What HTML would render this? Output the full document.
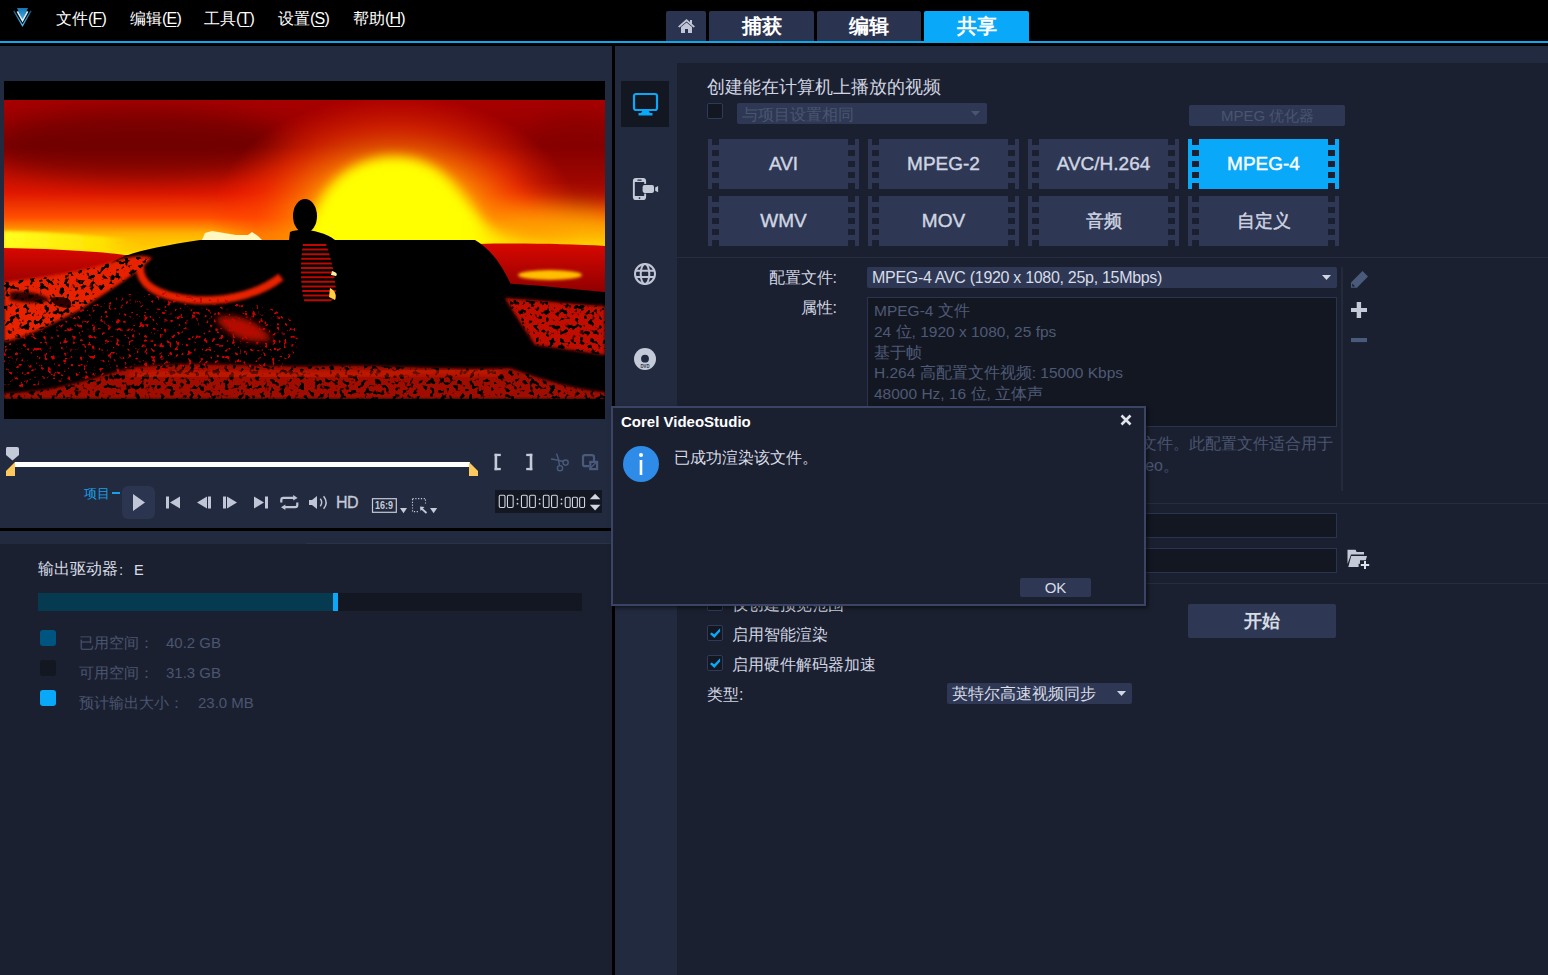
<!DOCTYPE html>
<html><head><meta charset="utf-8">
<style>
*{margin:0;padding:0;box-sizing:border-box}
html,body{width:1548px;height:975px;overflow:hidden}
body{position:relative;background:#1b2030;font-family:"Liberation Sans",sans-serif;color:#c8cdd8}
.a{position:absolute}
.t{position:absolute;white-space:nowrap;line-height:1}
.menu{font-size:16px;color:#fff;top:11px}
.menu u{text-decoration:underline;text-underline-offset:2px}
.tab{position:absolute;top:11px;height:30px;background:#2a3450;border-radius:2px 2px 0 0;color:#fff;font-weight:bold;font-size:20px;text-align:center;line-height:30px}
.fmt{position:absolute;width:151px;height:50px;background:#2e3854;color:#d0d5e2;font-size:19px;text-align:center;line-height:50px;-webkit-text-stroke:0.4px currentColor}
.fmt:before,.fmt:after{content:"";position:absolute;top:0;width:11px;height:50px;
 background:repeating-linear-gradient(to bottom,#1b2030 0px,#1b2030 6px,transparent 6px,transparent 11px)}
.fmt:before{left:4px;width:7px}
.fmt:after{right:4px;width:7px}
.fmt.on{background:#0aa8f8;color:#fff}
.cb{position:absolute;width:16px;height:16px;background:#131722;border:1px solid #2f3a58;border-radius:2px}
.ic{fill:#c0c6d6}
</style></head><body>
<!-- menu bar -->
<div class="a" style="left:0;top:0;width:1548px;height:46px;background:#000"></div>
<div class="a" style="left:0;top:41px;width:1548px;height:2px;background:#0ea8ee"></div>
<svg class="a" style="left:8px;top:4px" width="30" height="26" viewBox="8 4 30 26">
 <defs><linearGradient id="lg" x1="0" y1="0" x2="0" y2="1"><stop offset="0" stop-color="#1a72b2"/><stop offset="1" stop-color="#3ab4ec"/></linearGradient>
 <linearGradient id="lg2" x1="0" y1="0" x2="0" y2="1"><stop offset="0" stop-color="#165a88"/><stop offset="1" stop-color="#48bcf0"/></linearGradient></defs>
 <polygon points="17,8 28,8 22.5,20" fill="url(#lg)"/>
 <polyline points="17.4,11.4 22.5,20.8 27.6,11.4" stroke="#d8f0ff" stroke-width="1.7" fill="none"/>
 <polyline points="13.8,10.8 22.5,25.6 31,10.8" stroke="url(#lg2)" stroke-width="1.3" fill="none"/>
</svg>
<div class="t menu" style="left:56px">文件<span style="letter-spacing:-0.8px">(<u>F</u>)</span></div>
<div class="t menu" style="left:130px">编辑<span style="letter-spacing:-0.8px">(<u>E</u>)</span></div>
<div class="t menu" style="left:204px">工具<span style="letter-spacing:-0.8px">(<u>T</u>)</span></div>
<div class="t menu" style="left:278px">设置<span style="letter-spacing:-0.8px">(<u>S</u>)</span></div>
<div class="t menu" style="left:353px">帮助<span style="letter-spacing:-0.8px">(<u>H</u>)</span></div>
<!-- tabs -->
<div class="tab" style="left:666px;width:40px">
 <svg class="a" style="left:12px;top:8px" width="17" height="14" viewBox="0 0 17 14"><path d="M8.5 0 L17 7.5 L15.5 8.5 L8.5 2.5 L1.5 8.5 L0 7.5 Z M12 1 h2 v4 l-2 -1.6 Z M3 8 L8.5 3.5 L14 8 V14 H10 V10 H7 V14 H3 Z" fill="#c0c6d6"/></svg>
</div>
<div class="tab" style="left:709px;width:105px">捕获</div>
<div class="tab" style="left:817px;width:104px">编辑</div>
<div class="tab" style="left:924px;width:105px;background:#0aa8f8">共享</div>

<!-- left panel -->
<div class="a" style="left:0;top:46px;width:612px;height:482px;background:#222a3f"></div>
<div class="a" style="left:0;top:528px;width:611px;height:3px;background:#000"></div>
<div class="a" style="left:0;top:531px;width:612px;height:13px;background:#222a3f"></div>
<div class="a" style="left:306px;top:543px;width:305px;height:1px;background:#2a3248"></div>
<div class="a" style="left:612px;top:46px;width:3px;height:929px;background:#000"></div>

<!-- video -->
<div class="a" id="video" style="left:4px;top:81px;width:601px;height:338px;background:#000;overflow:hidden">
<svg width="601" height="338" viewBox="4 81 601 338">
 <defs>
  <linearGradient id="sky" x1="0" y1="100" x2="0" y2="255" gradientUnits="userSpaceOnUse">
   <stop offset="0" stop-color="#a80000"/>
   <stop offset="0.3" stop-color="#900000"/>
   <stop offset="0.6" stop-color="#e01800"/>
   <stop offset="0.76" stop-color="#ff5000"/>
   <stop offset="0.86" stop-color="#ffb000"/>
   <stop offset="1" stop-color="#ffe800"/>
  </linearGradient>
  <radialGradient id="glow" cx="0.5" cy="0.5" r="0.5">
   <stop offset="0" stop-color="#ffe000"/>
   <stop offset="0.45" stop-color="#ffa000" stop-opacity="0.9"/>
   <stop offset="0.75" stop-color="#ff4000" stop-opacity="0.5"/>
   <stop offset="1" stop-color="#ff2000" stop-opacity="0"/>
  </radialGradient>
  <linearGradient id="hz" x1="0" y1="0" x2="1" y2="0">
   <stop offset="0" stop-color="#ffff20"/>
   <stop offset="0.6" stop-color="#ffe000"/>
   <stop offset="1" stop-color="#ffa000" stop-opacity="0"/>
  </linearGradient>
  <linearGradient id="sea" x1="0" y1="0" x2="0" y2="1">
   <stop offset="0" stop-color="#d80800"/>
   <stop offset="1" stop-color="#900000"/>
  </linearGradient>
  <filter id="b6" x="-50%" y="-50%" width="200%" height="200%"><feGaussianBlur stdDeviation="6"/></filter>
  <filter id="b3" x="-50%" y="-50%" width="200%" height="200%"><feGaussianBlur stdDeviation="3"/></filter>
  <filter id="b15" x="-50%" y="-50%" width="200%" height="200%"><feGaussianBlur stdDeviation="1.5"/></filter>
  <filter id="b12" x="-50%" y="-50%" width="200%" height="200%"><feGaussianBlur stdDeviation="12"/></filter>
  <filter id="spk" x="0" y="0" width="100%" height="100%"><feTurbulence type="fractalNoise" baseFrequency="0.25" numOctaves="2" seed="7"/><feColorMatrix type="matrix" values="0 0 0 0 0.6  0 0 0 0 0.0  0 0 0 0 0  0 0 0 10 -6.2"/><feComposite in2="SourceAlpha" operator="in"/></filter>
  <filter id="spk2" x="0" y="0" width="100%" height="100%"><feTurbulence type="fractalNoise" baseFrequency="0.2" numOctaves="2" seed="11"/><feColorMatrix type="matrix" values="0 0 0 0 0  0 0 0 0 0  0 0 0 0 0  0 0 0 9 -4.9"/><feComposite in2="SourceAlpha" operator="in"/></filter>
 </defs>
 <rect x="4" y="100" width="601" height="300" fill="url(#sky)"/>
 <ellipse cx="140" cy="145" rx="150" ry="35" fill="#580000" opacity="0.55" filter="url(#b12)"/>
 <ellipse cx="575" cy="165" rx="60" ry="50" fill="#800000" opacity="0.6" filter="url(#b12)"/>
 <ellipse cx="395" cy="225" rx="185" ry="130" fill="url(#glow)"/>
 <path d="M300 247 C312 225 322 162 390 157 C450 155 462 205 490 226 C515 240 560 241 605 243 L605 252 L300 252 Z" fill="#ffff00" filter="url(#b6)"/>
 <path d="M4 231 C60 232 120 238 170 242 L170 256 C120 252 60 249 4 248 Z" fill="url(#hz)" filter="url(#b15)"/>
 <ellipse cx="555" cy="228" rx="70" ry="22" fill="#ffb000" opacity="0.8" filter="url(#b12)"/>
 <rect x="4" y="255" width="601" height="145" fill="#000"/>
 <!-- seas -->
 <path d="M4 248 C60 249 110 252 130 256 L120 290 L4 290 Z" fill="url(#sea)"/>
 <path d="M478 244 C520 243 570 244 605 246 L605 292 L478 292 Z" fill="url(#sea)"/>
 <ellipse cx="550" cy="275" rx="32" ry="5" fill="#ffc000" filter="url(#b15)"/>
 <!-- hill -->
 <path d="M4 400 L4 345 C40 330 90 300 112 262 C130 252 160 246 200 240 L475 240 C492 250 505 268 515 295 C522 320 530 340 540 350 L605 360 L605 400 Z" fill="#000"/>
 <!-- left red terrain -->
 <path d="M4 282 C40 278 80 272 112 262 C128 256 145 254 152 258 C135 275 110 290 80 310 C50 325 25 338 4 342 Z" fill="#e82000" filter="url(#b15)"/>
 <path d="M10 292 C30 290 45 295 50 300 C35 305 20 302 10 300 Z" fill="#300000" filter="url(#b15)"/>
 <path d="M50 298 C65 295 75 300 70 308 C60 308 52 305 50 298 Z" fill="#300000"/>
 <!-- crater rim -->
 <path d="M140 264 C138 282 152 296 195 300 C232 302 262 292 281 277" fill="none" stroke="#e82000" stroke-width="8" filter="url(#b15)"/>
 <path d="M215 318 C235 312 260 320 272 340 C250 345 228 338 215 318 Z" fill="#b01000" filter="url(#b3)"/>
 <!-- right terrain -->
 <path d="M500 283 C540 285 580 290 605 292 L605 300 C570 298 530 292 505 292 Z" fill="#000"/>
 <path d="M505 298 C540 300 580 305 605 306 L605 355 C580 352 560 348 535 345 C525 330 515 315 505 298 Z" fill="#c01000" filter="url(#b15)"/>
 <!-- bottom strip -->
 <path d="M4 393 C60 392 100 375 135 367 C200 360 260 368 320 366 C380 364 440 370 510 368 C550 382 580 390 605 392 L605 399 L4 399 Z" fill="#a00800" filter="url(#b15)"/>
 <path d="M4 393 C60 392 100 375 135 367 C200 360 260 368 320 366 C380 364 440 370 510 368 C550 382 580 390 605 392 L605 399 L4 399 Z" fill="#fff" filter="url(#spk2)"/>
 <path d="M130 375 C200 372 300 378 420 372 L500 372" fill="none" stroke="#e02000" stroke-width="4" filter="url(#b3)"/>
 <path d="M4 345 C40 330 90 300 150 290 C220 300 260 300 285 315 C305 330 300 355 280 368 C200 365 100 375 4 390 Z" fill="#fff" filter="url(#spk)"/>
 <path d="M505 300 C540 300 580 305 605 306 L605 355 C580 352 560 348 535 345 Z" fill="#fff" filter="url(#spk2)"/>
 <path d="M4 282 C40 278 80 272 112 262 C128 256 145 254 152 258 C135 275 110 290 80 310 C50 325 25 338 4 342 Z" fill="#fff" filter="url(#spk2)"/>
 <!-- building -->
 <polygon points="202,240 205,233 212,231 236,235 248,235 252,232 258,236 262,240" fill="#fff8c0"/>
 <!-- figure -->
 <ellipse cx="305" cy="216" rx="12" ry="17" fill="#000"/>
 <path d="M290 232 C300 228 322 230 335 240 L342 275 C340 300 335 310 330 315 L300 315 C290 300 285 270 290 232 Z" fill="#000"/>
 <clipPath id="torso"><path d="M303 244 L326 244 C332 260 336 280 336 295 C334 303 320 305 305 303 C300 290 300 260 303 244 Z"/></clipPath>
 <g clip-path="url(#torso)"><path d="M298 245.0 H340 M298 249.6 H340 M298 254.2 H340 M298 258.8 H340 M298 263.4 H340 M298 268.0 H340 M298 272.6 H340 M298 277.2 H340 M298 281.8 H340 M298 286.4 H340 M298 291.0 H340 M298 295.6 H340 M298 300.2 H340 " stroke="#c00800" stroke-width="2"/></g>
 <path d="M330 288 C335 290 337 296 335 300 L329 297 Z" fill="#ffd040"/>
 <path d="M332 271 C336 272 338 274 336 276 L331 275 Z" fill="#fff0a0"/>
 <rect x="4" y="81" width="601" height="19" fill="#000"/>
 <rect x="4" y="399" width="601" height="20" fill="#000"/>
</svg>
</div>

<!-- timeline -->
<svg class="a" style="left:5px;top:446px" width="15" height="31" viewBox="0 0 15 31">
 <path d="M2 1 H12 Q14 1 14 3 V9 L7.5 14.5 L1 9 V3 Q1 1 2 1 Z" fill="#c5cad8"/>
 <polygon points="10,16 10,30 1,30 1,25" fill="#fdc85e"/>
</svg>
<div class="a" style="left:15px;top:462px;width:455px;height:5px;background:#fff"></div>
<svg class="a" style="left:469px;top:462px" width="10" height="14" viewBox="0 0 10 14"><polygon points="0,0 9,9 9,14 0,14" fill="#fdc85e"/></svg>
<svg class="a" style="left:490px;top:450px" width="112" height="24" viewBox="490 450 112 24">
 <g fill="#c5cad8">
  <rect x="494.6" y="453.8" width="2.6" height="16.4"/><rect x="494.6" y="453.8" width="6.2" height="2.3"/><rect x="494.6" y="467.9" width="6.2" height="2.3"/>
  <rect x="529.7" y="453.8" width="2.6" height="16.4"/><rect x="526.2" y="453.8" width="6.1" height="2.3"/><rect x="526.2" y="467.9" width="6.1" height="2.3"/>
 </g>
 <g fill="none" stroke="#4a5a7a" stroke-width="1.4">
  <path d="M556.5 453.5 C558 457 559 461 559.5 465.5"/>
  <path d="M551 459 C555 459.5 559 460.5 563 461.5"/>
  <circle cx="565.6" cy="462.6" r="2.6"/><circle cx="560" cy="468.2" r="2.6"/>
 </g>
 <g fill="none" stroke="#4a5a7a" stroke-width="2.2">
  <path d="M589 466.2 H585 Q583 466.2 583 464.2 V457.2 Q583 455.2 585 455.2 H592 Q594 455.2 594 457.2 V461"/>
  <rect x="590.3" y="461.9" width="6.8" height="7.2"/>
 </g>
 <path d="M590.5 468 L596 462.5" stroke="#4a5a7a" stroke-width="1.2"/>
</svg>
<div class="t" style="left:84px;top:487px;font-size:13px;color:#18a0e8">项目</div>
<div class="a" style="left:112px;top:492px;width:8px;height:2px;background:#18a0e8"></div>
<div class="a" style="left:122px;top:486px;width:33px;height:33px;background:#2b3550;border-radius:6px"></div>
<svg class="a" style="left:120px;top:486px" width="330" height="30" viewBox="0 0 330 30">
 <g fill="#c0c6d6">
 <polygon points="13,8 25,16.5 13,25"/>
 <rect x="46" y="10.5" width="3" height="12"/><polygon points="60,10.5 60,22.5 50,16.5"/>
 <polygon points="87,10.5 87,22.5 77,16.5"/><rect x="88" y="10.5" width="3" height="12"/>
 <rect x="103" y="10.5" width="3" height="12"/><polygon points="107,10.5 107,22.5 117,16.5"/>
 <polygon points="134,10.5 134,22.5 144,16.5"/><rect x="145" y="10.5" width="3" height="12"/>
 </g>
 <g fill="none" stroke="#c0c6d6" stroke-width="2.2">
  <path d="M161.3 16.6 V14 Q161.3 11.9 163.4 11.9 H174"/><path d="M177.3 16.6 V19.1 Q177.3 21.2 175.2 21.2 H165"/>
 </g>
 <g fill="#c0c6d6">
  <polygon points="173.2,8.9 177.6,11.9 173.2,14.5"/><polygon points="165.4,18.4 161,21.2 165.4,24"/>
  <polygon points="189,14 192,14 197,10 197,23 192,19 189,19"/>
 </g>
 <g fill="none" stroke="#c0c6d6" stroke-width="1.5">
  <path d="M200.3 12.8 Q203.2 16.5 200.3 20.2"/><path d="M203.6 10.2 Q208.6 16.5 203.6 22.8"/>
 </g>
</svg>
<div class="t" style="left:336px;top:495px;font-size:16px;color:#c5cad8;letter-spacing:-0.5px;-webkit-text-stroke:0.3px #c5cad8">HD</div>
<svg class="a" style="left:300px;top:485px" width="145" height="35" viewBox="300 485 145 35">
 <rect x="372.5" y="498.7" width="23.8" height="13.6" fill="none" stroke="#c5cad8" stroke-width="1.2"/>
 <text x="384" y="509.3" font-size="10" font-weight="bold" text-anchor="middle" fill="#c5cad8" font-family="Liberation Sans" textLength="18" lengthAdjust="spacingAndGlyphs">16:9</text>
 <polygon points="400,508 407,508 403.5,513.2" fill="#c5cad8"/>
 <rect x="412.5" y="498.6" width="13" height="13" fill="none" stroke="#c5cad8" stroke-width="1.1" stroke-dasharray="1.2 1.6"/>
 <rect x="418" y="504" width="10" height="10" fill="#222a3f"/>
 <path d="M421 508 L426.5 513" stroke="#c5cad8" stroke-width="1.8"/><polygon points="420,506.5 424.5,507 420.5,511" fill="#c5cad8"/>
 <polygon points="430,508 437.2,508 433.6,513.2" fill="#c5cad8"/>
</svg>
<div class="a" style="left:495px;top:490px;width:107px;height:23px;background:#131722"></div>
<svg class="a" style="left:495px;top:490px" width="107" height="23" viewBox="495 490 107 23">
 <g fill="none" stroke="#d0d5e2" stroke-width="1.1"><rect x="499.25" y="495.25" width="5.7" height="12.2" rx="1.2"/><rect x="507.45" y="495.25" width="5.7" height="12.2" rx="1.2"/><rect x="521.4499999999999" y="495.25" width="5.7" height="12.2" rx="1.2"/><rect x="529.65" y="495.25" width="5.7" height="12.2" rx="1.2"/><rect x="543.35" y="495.25" width="5.7" height="12.2" rx="1.2"/><rect x="551.5500000000001" y="495.25" width="5.7" height="12.2" rx="1.2"/><rect x="565.25" y="497.25" width="4.9" height="10.2" rx="1.2"/><rect x="572.45" y="497.25" width="4.9" height="10.2" rx="1.2"/><rect x="579.65" y="497.25" width="4.9" height="10.2" rx="1.2"/></g>
 <g fill="#d0d5e2"><circle cx="517.5" cy="499.3" r="0.9"/><circle cx="517.5" cy="503.7" r="0.9"/><circle cx="539.6" cy="499.3" r="0.9"/><circle cx="539.6" cy="503.7" r="0.9"/><circle cx="561.5" cy="499.3" r="0.9"/><circle cx="561.5" cy="503.7" r="0.9"/></g>
 <polygon points="595.1,493.8 600.4,499.2 589.8,499.2" fill="#d0d5e2"/><polygon points="589.8,504.8 600.4,504.8 595.1,510.4" fill="#d0d5e2"/>
</svg>

<!-- bottom left info -->
<div class="t" style="left:38px;top:561px;font-size:16px;color:#d8dce6">输出驱动器</div>
<div class="t" style="left:119px;top:562px;font-size:15px;color:#d8dce6">:</div>
<div class="t" style="left:134px;top:563px;font-size:14.5px;color:#d8dce6">E</div>
<div class="a" style="left:38px;top:593px;width:544px;height:18px;background:#131722"></div>
<div class="a" style="left:38px;top:593px;width:296px;height:18px;background:#053a50"></div>
<div class="a" style="left:333px;top:593px;width:5px;height:18px;background:#0aa8f8"></div>
<div class="a" style="left:40px;top:630px;width:16px;height:16px;background:#005480;border-radius:3px"></div>
<div class="a" style="left:40px;top:660px;width:16px;height:16px;background:#131722;border-radius:3px"></div>
<div class="a" style="left:40px;top:690px;width:16px;height:16px;background:#0aa8f8;border-radius:3px"></div>
<div class="t" style="left:79px;top:635px;font-size:15px;color:#4a5570">已用空间：</div>
<div class="t" style="left:166px;top:635px;font-size:15px;color:#4a5570">40.2 GB</div>
<div class="t" style="left:79px;top:665px;font-size:15px;color:#4a5570">可用空间：</div>
<div class="t" style="left:166px;top:665px;font-size:15px;color:#4a5570">31.3 GB</div>
<div class="t" style="left:79px;top:695px;font-size:15px;color:#4a5570">预计输出大小：</div>
<div class="t" style="left:198px;top:695px;font-size:15px;color:#4a5570">23.0 MB</div>

<!-- right panel -->
<div class="a" style="left:615px;top:46px;width:933px;height:929px;background:#222a3f"></div>
<div class="a" style="left:677px;top:63px;width:871px;height:912px;background:#1b2030"></div>
<div class="a" style="left:621px;top:81px;width:48px;height:46px;background:#131722"></div>
<svg class="a" style="left:632px;top:92px" width="27" height="24" viewBox="0 0 27 24">
 <rect x="2" y="2" width="23" height="16" rx="2" fill="none" stroke="#0aa8f8" stroke-width="2.2"/>
 <polygon points="11,18 16,18 18,21 9,21" fill="#0aa8f8"/><rect x="6.5" y="21" width="14" height="2.5" fill="#0aa8f8"/>
</svg>
<svg class="a" style="left:628px;top:172px" width="34" height="34" viewBox="628 172 34 34">
 <g fill="#c5cad8">
 <path d="M636 177.9 H643 Q646.1 177.9 646.1 181 V197 Q646.1 200.1 643 200.1 H636 Q632.9 200.1 632.9 197 V181 Q632.9 177.9 636 177.9 Z M634.8 182.1 V196 H644.2 V182.1 Z" fill-rule="evenodd"/>
 </g>
 <rect x="637.3" y="179.6" width="4.4" height="1.1" rx="0.5" fill="#222a3f"/>
 <circle cx="639.5" cy="198.1" r="0.9" fill="#222a3f"/>
 <rect x="641.2" y="183.9" width="16" height="9.7" fill="#222a3f"/>
 <rect x="642.6" y="185.1" width="11.4" height="7.8" rx="1.8" fill="#c5cad8"/>
 <polygon points="655.2,187.4 658.1,185.9 658.1,192.3 655.2,190.8" fill="#c5cad8"/>
</svg>
<svg class="a" style="left:633px;top:262px" width="24" height="24" viewBox="0 0 24 24" fill="none" stroke="#c0c6d6" stroke-width="2">
 <circle cx="12" cy="12" r="10"/><ellipse cx="12" cy="12" rx="4.3" ry="10"/><path d="M2 8.8 H22 M2 15 H22"/>
</svg>
<svg class="a" style="left:633px;top:347px" width="24" height="24" viewBox="0 0 24 24">
 <circle cx="12" cy="12" r="11" fill="#c5cad8"/><circle cx="12" cy="11.7" r="3.9" fill="#222a3f"/>
 <text x="12" y="20.8" font-size="5.5" font-weight="bold" text-anchor="middle" fill="#2a3248" font-family="Liberation Sans" textLength="9" lengthAdjust="spacingAndGlyphs">DVD</text>
</svg>

<div class="t" style="left:707px;top:78px;font-size:18px;color:#d0d5e2">创建能在计算机上播放的视频</div>
<div class="cb" style="left:707px;top:103px"></div>
<div class="a" style="left:737px;top:103px;width:250px;height:21px;background:#2e3854;border-radius:2px"></div>
<div class="t" style="left:742px;top:107px;font-size:16px;color:#4a5570">与项目设置相同</div>
<svg class="a" style="left:971px;top:111px" width="10" height="6"><polygon points="0,0 9,0 4.5,5" fill="#4a5570"/></svg>
<div class="a" style="left:1189px;top:105px;width:156px;height:21px;background:#2e3854;border-radius:2px"></div>
<div class="t" style="left:1221px;top:108px;font-size:15px;color:#4a5570">MPEG 优化器</div>

<div class="fmt" style="left:708px;top:139px">AVI</div>
<div class="fmt" style="left:868px;top:139px">MPEG-2</div>
<div class="fmt" style="left:1028px;top:139px">AVC/H.264</div>
<div class="fmt on" style="left:1188px;top:139px">MPEG-4</div>
<div class="fmt" style="left:708px;top:196px">WMV</div>
<div class="fmt" style="left:868px;top:196px">MOV</div>
<div class="fmt" style="left:1028px;top:196px"><span style="font-size:18px">音频</span></div>
<div class="fmt" style="left:1188px;top:196px"><span style="font-size:18px">自定义</span></div>

<div class="a" style="left:677px;top:257px;width:871px;height:1px;background:#262d40"></div>
<div class="t" style="left:700px;width:137px;text-align:right;top:270px;font-size:16px;color:#d0d5e2">配置文件:</div>
<div class="a" style="left:867px;top:267px;width:470px;height:21px;background:#2e3854;border-radius:2px"></div>
<div class="t" style="left:872px;top:270px;font-size:16px;color:#d8dce6;letter-spacing:-0.3px">MPEG-4 AVC (1920 x 1080, 25p, 15Mbps)</div>
<svg class="a" style="left:1322px;top:275px" width="10" height="6"><polygon points="0,0 9,0 4.5,5" fill="#d0d5e2"/></svg>
<svg class="a" style="left:1345px;top:265px" width="30" height="85" viewBox="1345 265 30 85">
 <polygon points="1362.5,271 1368,276.5 1357,287.7 1351,287.7 1351,282.5" fill="#4a5a7a"/>
 <polygon points="1352.2,283.6 1352.2,286.6 1355.2,286.6" fill="#1b2030"/>
 <path d="M1356.7 302 H1361.1 V307.9 H1367 V312.1 H1361.1 V318 H1356.7 V312.1 H1351 V307.9 H1356.7 Z" fill="#c5cad8"/>
 <rect x="1351" y="338" width="16" height="4.1" fill="#4a5a7a"/>
</svg>
<div class="t" style="left:700px;width:137px;text-align:right;top:300px;font-size:16px;color:#d0d5e2">属性:</div>
<div class="a" style="left:867px;top:297px;width:470px;height:130px;background:#131722;border:1px solid #2a3450"></div>
<div class="a" style="left:874px;top:301px;font-size:15.5px;line-height:20.8px;color:#4e5a75;white-space:nowrap">MPEG-4 文件<br>24 位, 1920 x 1080, 25 fps<br>基于帧<br>H.264 高配置文件视频: 15000 Kbps<br>48000 Hz, 16 位, 立体声</div>

<div class="a" style="left:1341px;top:267px;width:2px;height:224px;background:#232a3c"></div>
<div class="t" style="left:1000px;width:333px;text-align:right;top:436px;font-size:16px;color:#4a5570">MPEG-4 文件。此配置文件适合用于</div>
<div class="t" style="left:900px;width:279px;text-align:right;top:458px;font-size:16px;color:#4a5570">计算机上播放或上传至 Vimeo。</div>
<div class="a" style="left:677px;top:503px;width:871px;height:1px;background:#262d40"></div>
<div class="a" style="left:867px;top:513px;width:470px;height:25px;background:#131722;border:1px solid #2a3450"></div>
<div class="a" style="left:867px;top:548px;width:470px;height:25px;background:#131722;border:1px solid #2a3450"></div>
<svg class="a" style="left:1340px;top:540px" width="40" height="40" viewBox="1340 540 40 40">
 <path d="M1347.5 549.8 H1355.6 L1356.6 551.9 H1364 V554.6 H1351 L1347.5 564 Z" fill="#c5cad8"/>
 <path d="M1351.2 556 H1367 L1365.8 560.2 H1360 V563.8 H1358.6 V566.9 H1348.3 Z" fill="#c5cad8"/>
 <path d="M1364 561 H1366 V564 H1369.2 V566 H1366 V569 H1364 V566 H1360.8 V564 H1364 Z" fill="#dde1ea"/>
</svg>
<div class="a" style="left:677px;top:583px;width:871px;height:1px;background:#262d40"></div>
<div class="cb" style="left:707px;top:595px"></div>
<div class="t" style="left:732px;top:597px;font-size:16px;color:#d0d5e2">仅创建预览范围</div>
<div class="cb" style="left:707px;top:625px"></div>
<svg class="a" style="left:709px;top:628px" width="12" height="11"><polygon points="1,6 5.3,9.9 11.1,3.5 11.1,0.2 5.3,6.2 2.6,4.5" fill="#0aa8f8"/></svg>
<div class="t" style="left:732px;top:627px;font-size:16px;color:#d0d5e2">启用智能渲染</div>
<div class="cb" style="left:707px;top:655px"></div>
<svg class="a" style="left:709px;top:658px" width="12" height="11"><polygon points="1,6 5.3,9.9 11.1,3.5 11.1,0.2 5.3,6.2 2.6,4.5" fill="#0aa8f8"/></svg>
<div class="t" style="left:732px;top:657px;font-size:16px;color:#d0d5e2">启用硬件解码器加速</div>
<div class="t" style="left:707px;top:687px;font-size:16px;color:#d0d5e2">类型:</div>
<div class="a" style="left:947px;top:683px;width:185px;height:21px;background:#2e3854;border-radius:2px"></div>
<div class="t" style="left:952px;top:686px;font-size:16px;color:#d8dce6">英特尔高速视频同步</div>
<svg class="a" style="left:1117px;top:691px" width="10" height="6"><polygon points="0,0 9,0 4.5,5" fill="#d0d5e2"/></svg>
<div class="a" style="left:1188px;top:604px;width:148px;height:34px;background:#2e3854;border-radius:2px"></div>
<div class="t" style="left:1188px;width:148px;text-align:center;top:612px;font-size:18px;font-weight:bold;color:#d8dce6">开始</div>

<!-- dialog -->
<div class="a" style="left:611px;top:406px;width:535px;height:200px;background:#1b2030;border:2px solid #3a4566;box-shadow:2px 2px 4px rgba(0,0,0,0.5)"></div>
<div class="t" style="left:621px;top:414px;font-size:15px;font-weight:bold;color:#fff">Corel VideoStudio</div>
<svg class="a" style="left:1120px;top:414px" width="12" height="12" viewBox="0 0 12 12"><path d="M1.5 1.5 L10.5 10.5 M10.5 1.5 L1.5 10.5" stroke="#e0e4ec" stroke-width="2.6"/></svg>
<svg class="a" style="left:622px;top:445px" width="38" height="38" viewBox="0 0 38 38">
 <circle cx="19" cy="19" r="18" fill="#2e8be8"/><circle cx="19" cy="10" r="2" fill="#fff"/><rect x="17.7" y="15" width="2.6" height="15" fill="#fff"/>
</svg>
<div class="t" style="left:674px;top:450px;font-size:16px;color:#d8dce6">已成功渲染该文件。</div>
<div class="a" style="left:1020px;top:578px;width:71px;height:19px;background:#2e3854;border-radius:2px"></div>
<div class="t" style="left:1020px;width:71px;text-align:center;top:580px;font-size:15px;color:#d8dce6">OK</div>
</body></html>
